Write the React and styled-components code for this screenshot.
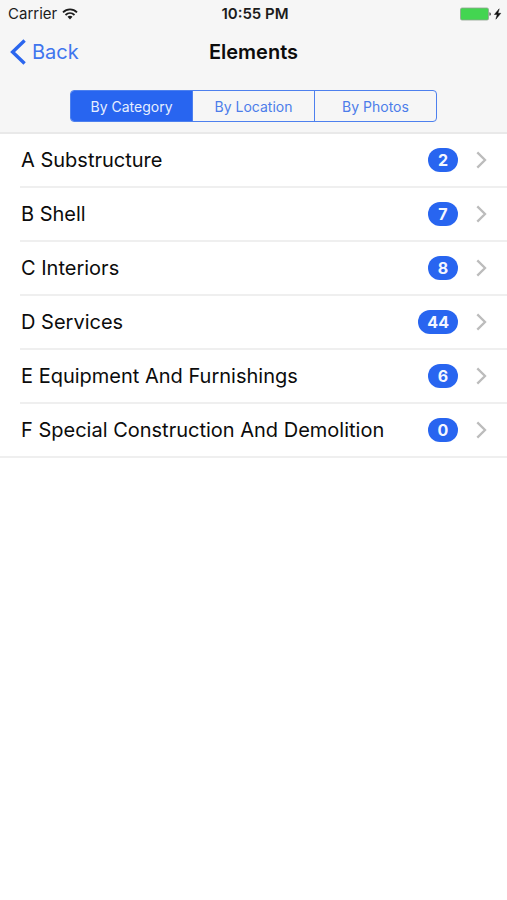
import React, { useState } from "react";
import styled, { createGlobalStyle } from "styled-components";

const GlobalStyle = createGlobalStyle`
  * {
    box-sizing: border-box;
  }

  body {
    margin: 0;
    background: #ffffff;
    color: #0c0c0c;
    font-family: Inter, Roboto, "Liberation Sans", sans-serif;
  }
`;

const segments = ["By Category", "By Location", "By Photos"];

const elements = [
  { id: "a", name: "A Substructure", count: 2 },
  { id: "b", name: "B Shell", count: 7 },
  { id: "c", name: "C Interiors", count: 8 },
  { id: "d", name: "D Services", count: 44 },
  { id: "e", name: "E Equipment And Furnishings", count: 6 },
  { id: "f", name: "F Special Construction And Demolition", count: 0 },
];

const WifiIcon = () => (
  <svg width="16" height="12" viewBox="0 0 16 12" aria-hidden="true">
    <g fill="none" stroke="#1c1c1c" strokeWidth="1.8">
      <path d="M1 4.4C5 .4 11 .4 15 4.4" />
      <path d="M3.5 7C6.1 4.5 9.9 4.5 12.5 7" />
    </g>
    <path d="M5.5 8.8C6.9 7.5 9.1 7.5 10.5 8.8L8 11.4Z" fill="#1c1c1c" />
  </svg>
);

const BatteryIcon = () => (
  <svg width="42" height="14" viewBox="0 0 42 14" aria-hidden="true">
    <rect x=".5" y="1" width="28" height="12" rx="1.5" fill="#43d551" stroke="#8fa391" strokeWidth=".8" />
    <path d="M29.5 5.2C31.2 5.5 31.2 8.5 29.5 8.8Z" fill="#2c2c2c" />
    <path d="M39.2 1.8L34.4 7.5H37.2L35.9 12.2L40.8 6.3H37.9Z" fill="#111111" stroke="#111111" strokeWidth=".5" />
  </svg>
);

const BackIcon = () => (
  <svg width="16" height="26" viewBox="0 0 16 26" aria-hidden="true">
    <path d="M14.6 1.6L2.6 13L14.6 24.4" fill="none" stroke="#2b66ee" strokeWidth="3.4" />
  </svg>
);

const ChevronIcon = () => (
  <svg width="11" height="18" viewBox="0 0 11 18" aria-hidden="true">
    <path d="M1.3 1.4L9 9L1.3 16.6" fill="none" stroke="#bcbcbc" strokeWidth="2.3" />
  </svg>
);

const App = () => {
  const [active, setActive] = useState("By Category");

  return (
    <>
      <GlobalStyle />
      <Header>
        <StatusBar>
          <Carrier>
            Carrier
            <WifiIcon />
          </Carrier>
          <Time>10:55 PM</Time>
          <Battery>
            <BatteryIcon />
          </Battery>
        </StatusBar>

        <NavBar>
          <BackButton type="button">
            <BackIcon />
            Back
          </BackButton>
          <Title>Elements</Title>
        </NavBar>

        <SegmentedControl role="group" aria-label="Group elements">
          {segments.map((segment) => (
            <Segment
              key={segment}
              type="button"
              $active={active === segment}
              aria-pressed={active === segment}
              onClick={() => setActive(segment)}
            >
              {segment}
            </Segment>
          ))}
        </SegmentedControl>
      </Header>

      <List>
        {elements.map((element) => (
          <Item key={element.id}>
            <RowLink href={`#${element.id}`}>
              <Name>{element.name}</Name>
              <Badge>{element.count}</Badge>
              <ChevronIcon />
            </RowLink>
          </Item>
        ))}
      </List>
    </>
  );
};

export default App;

const Header = styled.header`
  background: #f6f6f6;
  border-bottom: 2px solid #e9e9e9;
  padding-bottom: 10px;
`;

const StatusBar = styled.div`
  display: grid;
  grid-template-columns: 1fr auto 1fr;
  align-items: center;
  height: 27px;
  padding: 0 5px 0 8px;
  font-size: 15px;
  color: #1c1c1c;
`;

const Carrier = styled.div`
  display: flex;
  align-items: center;
  gap: 5px;
`;

const Time = styled.div`
  font-weight: 600;
`;

const Battery = styled.div`
  display: flex;
  justify-content: flex-end;
`;

const NavBar = styled.div`
  display: grid;
  grid-template-columns: 1fr auto 1fr;
  align-items: center;
  height: 49px;
  padding: 0 10px;
`;

const BackButton = styled.button`
  display: flex;
  align-items: center;
  gap: 6px;
  justify-self: start;
  padding: 0;
  border: 0;
  background: none;
  color: #3f75ee;
  font-family: inherit;
  font-size: 20px;
  cursor: pointer;
`;

const Title = styled.h1`
  margin: 0;
  font-size: 20px;
  font-weight: 600;
`;

const SegmentedControl = styled.div`
  display: flex;
  height: 32px;
  margin: 14px 70px 0;
  border: 1px solid #4d80ee;
  border-radius: 4px;
  overflow: hidden;
`;

const Segment = styled.button`
  flex: 1;
  padding: 0;
  border: 0;
  background: ${({ $active }) => ($active ? "#2865f0" : "transparent")};
  color: ${({ $active }) => ($active ? "#e6eeff" : "#4c7dea")};
  font-family: inherit;
  font-size: 14px;
  cursor: pointer;

  & + & {
    border-left: 1px solid #4d80ee;
  }
`;

const List = styled.ul`
  list-style: none;
  margin: 0;
  padding: 0;
`;

const Item = styled.li`
  padding-left: 20px;

  &:last-child {
    padding-left: 0;
  }

  &:last-child > a {
    padding-left: 21px;
  }
`;

const RowLink = styled.a`
  display: flex;
  align-items: center;
  height: 54px;
  padding: 0 20px 0 1px;
  border-bottom: 2px solid #efefef;
  color: inherit;
  text-decoration: none;
`;

const Name = styled.span`
  flex: 1;
  font-size: 20px;
`;

const Badge = styled.span`
  min-width: 30px;
  margin-right: 18px;
  padding: 0 9px;
  border-radius: 12px;
  background: #2865f0;
  color: #f4f7ff;
  font-size: 16px;
  font-weight: 700;
  line-height: 24px;
  text-align: center;
`;
